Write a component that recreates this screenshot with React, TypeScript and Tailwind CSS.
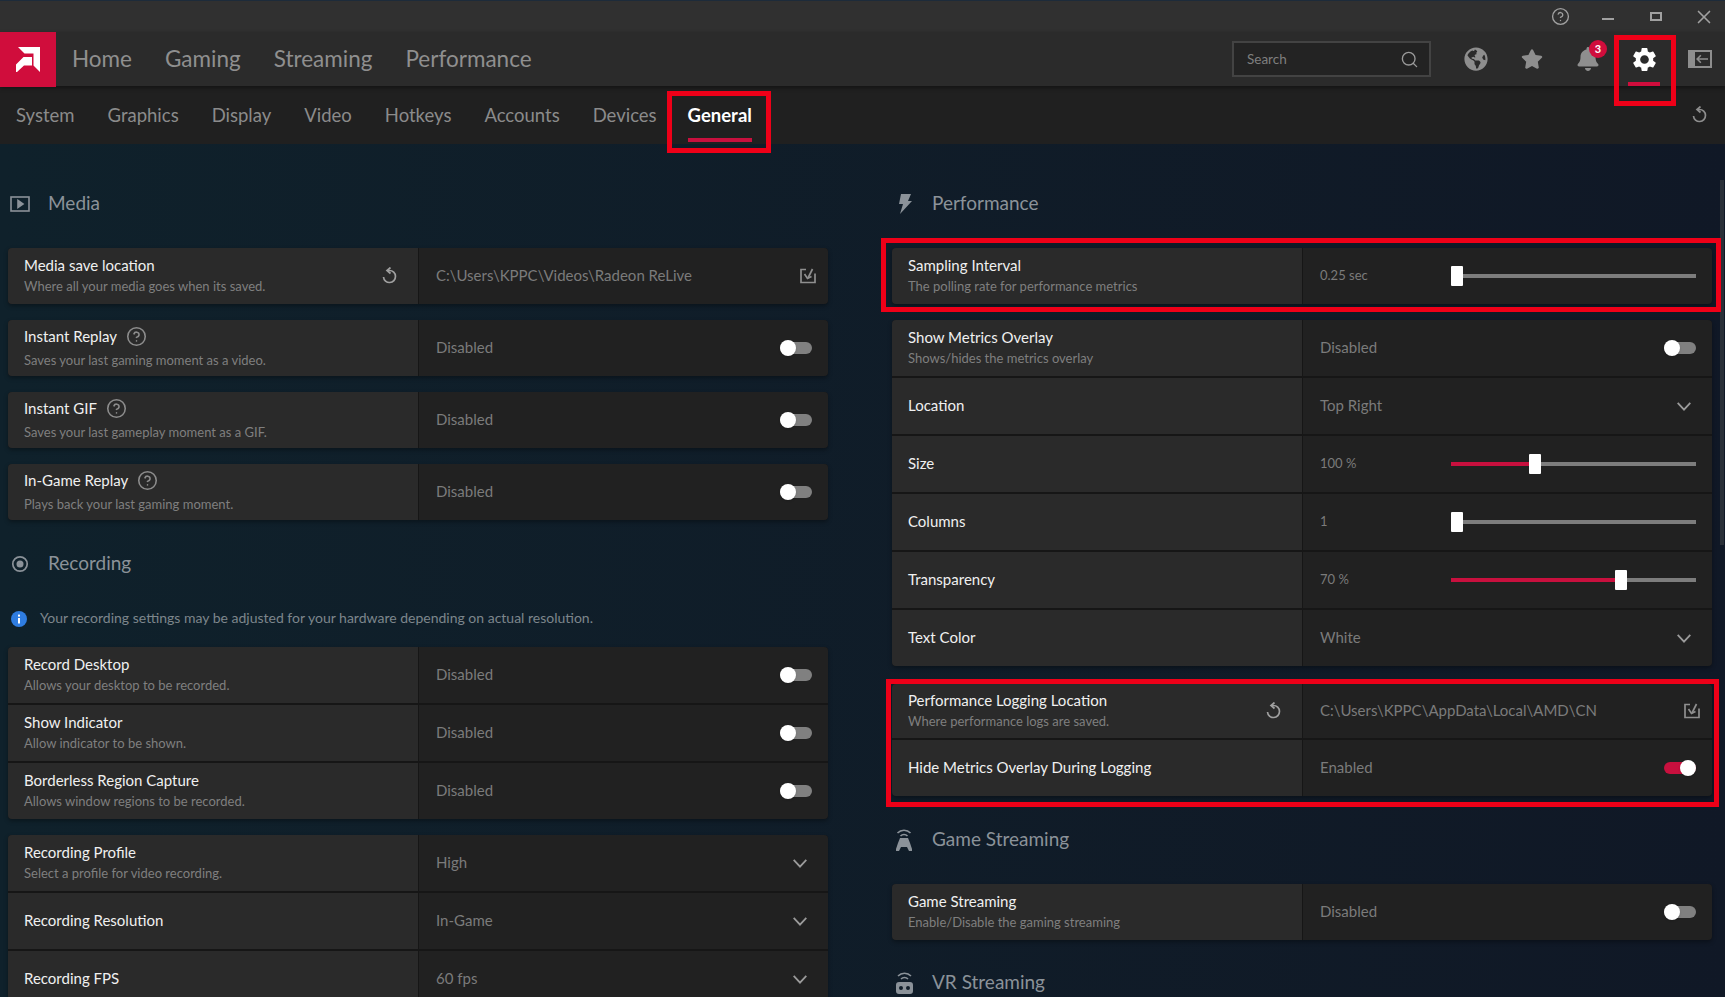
import React from 'react';
import { CircleHelp, Search, X } from 'lucide-react';
import { FaGlobeAmericas, FaStar, FaBell } from 'react-icons/fa';
import { MdSettings } from 'react-icons/md';

const font = "font-['Lato',sans-serif]";

function SaveIcon() {
  return (
    <svg width="16" height="16" viewBox="0 0 16 16" fill="none" stroke="#8f8f8f" strokeWidth="1.7" className="mr-[-4px]">
      <path d="M6 1.500H1v13h14V5.500" />
      <path d="M12.500 1 8 10" />
      <path d="M4.500 6 7.500 10.500 11.500 8.500" />
    </svg>
  );
}

function ResetIcon({ color = '#a0a0a0' }: { color?: string }) {
  return (
    <svg width="16" height="18" viewBox="0 0 16 18" fill="none" stroke={color} strokeWidth="1.7">
      <path d="M7 3.500h1.500a6 6 0 1 1-6 6.500" />
      <path d="M9.500 .5 6 3.500l3.500 3" />
    </svg>
  );
}

function Chevron() {
  return (
    <svg width="14" height="9" viewBox="0 0 14 9" fill="none" stroke="#9a9a9a" strokeWidth="1.800" className="mr-[5px]">
      <path d="M.7.800 7 7.600 13.300.8" />
    </svg>
  );
}

function Toggle({ on = false }: { on?: boolean }) {
  return (
    <div className={`relative h-[12px] w-[32px] rounded-full ${on ? 'bg-[#c8103e]' : 'bg-[#808080]'}`}>
      <div className={`absolute top-[-2px] h-[16px] w-[16px] rounded-full bg-white shadow ${on ? 'right-0' : 'left-0'}`} />
    </div>
  );
}

function Slider({ pct }: { pct: number }) {
  return (
    <div className="relative h-[4px] w-[245px] bg-[#7d7d7d]">
      <div className="absolute left-0 top-0 h-full bg-[#c8103e]" style={{ width: `${pct}%` }} />
      <div className="absolute top-[-8px] h-[20px] w-[12px] rounded-[1px] bg-white" style={{ left: `${pct}%` }} />
    </div>
  );
}

type RowProps = {
  title: string;
  desc?: string;
  help?: boolean;
  reset?: boolean;
  short?: boolean;
  value: string;
  control?: 'toggle' | 'on' | 'select' | 'save' | 'slider';
  pct?: number;
};

function Row({ title, desc, help, reset, short, value, control, pct = 0 }: RowProps) {
  return (
    <div className={`flex ${short ? 'h-[54px]' : 'h-[56px]'}`}>
      <div className="flex flex-1 items-center bg-[#2a2a2a] pl-4 pr-[21px]">
        <div className="flex-1 pb-[3px]">
          <div className={`flex items-center gap-[9px] text-[15px] text-[#f0f0f0] ${help ? 'h-[23px]' : 'leading-[20px]'}`}>
            {title}
            {help && <CircleHelp size={21} color="#8c8c8c" strokeWidth={1.8} />}
          </div>
          {desc && <div className={`text-[13px] leading-[18px] text-[#7f7f7f] ${help ? 'mt-[3px]' : 'mt-[2px]'}`}>{desc}</div>}
        </div>
        {reset && <ResetIcon />}
      </div>
      <div className="ml-[1px] flex w-[409px] items-center bg-[#212121] pl-[17px] pr-4">
        {control === 'slider' ? (
          <div className="w-[131px] text-[13px] text-[#7b7b7b]">{value}</div>
        ) : (
          <div className="flex-1 pb-[2px] text-[15px] text-[#7b7b7b]">{value}</div>
        )}
        {control === 'toggle' && <Toggle />}
        {control === 'on' && <Toggle on />}
        {control === 'select' && <Chevron />}
        {control === 'save' && <SaveIcon />}
        {control === 'slider' && <Slider pct={pct} />}
      </div>
    </div>
  );
}

function Group({ children }: { children: React.ReactNode }) {
  return (
    <div className="flex flex-col gap-[2px] overflow-hidden rounded-[4px] bg-[#161616] shadow-[0_2px_4px_rgba(0,0,0,0.35)]">
      {children}
    </div>
  );
}

function Heading({ icon, label }: { icon: React.ReactNode; label: string }) {
  return (
    <div className="flex h-[32px] items-center text-[19px] text-[#8b9299]">
      <div className="flex w-[40px] justify-start">{icon}</div>
      <span className="pb-[2px]">{label}</span>
    </div>
  );
}

const mainNav = ['Home', 'Gaming', 'Streaming', 'Performance'];
const subNav = ['System', 'Graphics', 'Display', 'Video', 'Hotkeys', 'Accounts', 'Devices'];

export default function App() {
  return (
    <div className={`relative flex h-[997px] w-[1725px] flex-col overflow-hidden bg-gradient-to-r from-[#0f212b] to-[#101826] ${font}`}>
      {/* title bar */}
      <div className="flex h-[32px] shrink-0 items-center justify-end border-t border-[#1d2b3a] bg-[#303030] pr-[10px] text-[#a0a0a0]">
        <CircleHelp size={19} strokeWidth={1.7} />
        <div className="ml-[32px] mt-[5px] h-[2px] w-[12px] bg-[#a0a0a0]" />
        <div className="ml-[36px] h-[9px] w-[12px] border-2 border-[#a0a0a0]" />
        <X size={22} strokeWidth={1.800} className="ml-[31px]" />
      </div>

      {/* main nav */}
      <div className="z-10 flex h-[54px] shrink-0 items-center bg-[#2b2b2b] shadow-[0_2px_4px_rgba(0,0,0,0.4)]">
        <div className="flex h-[55px] w-[56px] items-center justify-center bg-[#d00d3c]">
          <svg width="24" height="25" viewBox="0 0 24 25" fill="#fff">
            <path d="M2 0h22v25l-6.500-6.500V6.500H8.500z" />
            <path d="M0 17.500 7.500 10H16v8.500H8L1 25H0z" />
          </svg>
        </div>
        <div className="ml-[16px] flex gap-[33px] text-[22.5px] text-[#8f8f8f]">
          {mainNav.map((n) => (
            <span key={n}>{n}</span>
          ))}
        </div>
        <div className="ml-auto mr-[13px] flex items-center">
          <div className="flex h-[36px] w-[199px] items-center justify-between border-2 border-[#434343] bg-[#232323] pl-[13px] pr-[10px] text-[13.5px] text-[#7f7f7f]">
            Search
            <Search size={19} color="#9a9a9a" strokeWidth={1.7} />
          </div>
          <FaGlobeAmericas size={24} color="#8e8e8e" className="ml-[33px]" />
          <FaStar size={22} color="#8e8e8e" className="ml-[33px]" />
          <div className="relative ml-[33px]">
            <FaBell size={24} color="#8e8e8e" />
            <div className="absolute right-[-7px] top-[-7px] flex h-[18px] w-[18px] items-center justify-center rounded-full bg-[#d00d3c] text-[11px] font-bold text-white">3</div>
          </div>
          <div className="relative ml-[30px]">
            <MdSettings size={29} color="#fff" />
            <div className="absolute left-[-2px] top-[37px] h-[4px] w-[32px] bg-[#d00d3c]" />
          </div>
          <svg width="24" height="18" viewBox="0 0 24 18" className="ml-[29px]" fill="#8e8e8e">
            <path fillRule="evenodd" d="M0 0h24v18H0zM7 2v14h15V2z" />
            <path d="M20 8.200v1.600h-9l2.400 2.400-1.100 1.100L8 9l4.300-4.300 1.100 1.100L11 8.200z" />
          </svg>
        </div>
      </div>

      {/* sub nav */}
      <div className="flex h-[58px] shrink-0 items-center bg-[#202020] pl-4 pr-[18px] text-[18.5px] leading-[26px] text-[#8b8b8b]">
        <div className="flex gap-[33px]">
          {subNav.map((n) => (
            <span key={n}>{n}</span>
          ))}
          <span className="relative ml-[-2px] font-bold text-white">
            General
            <span className="absolute bottom-[-14px] left-0 h-[4px] w-full bg-[#c8103e]" />
          </span>
        </div>
        <div className="ml-auto">
          <ResetIcon color="#8e8e8e" />
        </div>
      </div>

      {/* content */}
      <div className="flex gap-[64px] pl-2 pr-[13px] pt-[44px]">
        <div className="flex w-[820px] shrink-0 flex-col">
          <Heading
            label="Media"
            icon={
              <svg width="20" height="16" viewBox="0 0 20 16" fill="none" stroke="#8b9299" strokeWidth="1.6" className="ml-[2px]">
                <rect x="1" y="1" width="18" height="14" />
                <path d="M8 4.500 13 8l-5 3.500z" fill="#8b9299" />
              </svg>
            }
          />
          <div className="mt-[28px] flex flex-col gap-4">
            <Group>
              <Row title="Media save location" desc="Where all your media goes when its saved." reset value="C:\Users\KPPC\Videos\Radeon ReLive" control="save" />
            </Group>
            <Group>
              <Row title="Instant Replay" desc="Saves your last gaming moment as a video." help value="Disabled" control="toggle" />
            </Group>
            <Group>
              <Row title="Instant GIF" desc="Saves your last gameplay moment as a GIF." help value="Disabled" control="toggle" />
            </Group>
            <Group>
              <Row title="In-Game Replay" desc="Plays back your last gaming moment." help value="Disabled" control="toggle" />
            </Group>
          </div>
          <div className="mt-[28px]">
            <Heading
              label="Recording"
              icon={
                <svg width="18" height="18" viewBox="0 0 18 18" className="ml-[3px]">
                  <circle cx="9" cy="9" r="7.200" fill="none" stroke="#8b9299" strokeWidth="1.700" />
                  <circle cx="9" cy="9" r="3.500" fill="#8b9299" />
                </svg>
              }
            />
          </div>
          <div className="mt-[28px] flex h-[22px] items-center text-[14px] text-[#7d868c]">
            <svg width="16" height="16" viewBox="0 0 16 16" className="ml-[3px] mr-[13px]">
              <circle cx="8" cy="8" r="8" fill="#2f7de1" />
              <rect x="7" y="7" width="2" height="5.500" fill="#fff" />
              <rect x="7" y="3.600" width="2" height="2" fill="#fff" />
            </svg>
            <span className="pb-[3px]">Your recording settings may be adjusted for your hardware depending on actual resolution.</span>
          </div>
          <div className="mt-[17px] flex flex-col gap-4">
            <Group>
              <Row title="Record Desktop" desc="Allows your desktop to be recorded." value="Disabled" control="toggle" />
              <Row title="Show Indicator" desc="Allow indicator to be shown." value="Disabled" control="toggle" />
              <Row title="Borderless Region Capture" desc="Allows window regions to be recorded." value="Disabled" control="toggle" />
            </Group>
            <Group>
              <Row title="Recording Profile" desc="Select a profile for video recording." value="High" control="select" />
              <Row title="Recording Resolution" value="In-Game" control="select" />
              <Row title="Recording FPS" value="60 fps" control="select" />
            </Group>
          </div>
        </div>

        <div className="flex w-[820px] shrink-0 flex-col">
          <Heading
            label="Performance"
            icon={
              <svg width="16" height="20" viewBox="0 0 16 20" fill="#8b9299" className="ml-[4px]">
                <path d="M5 0h10l-3 7h4L4 20l3-10H3z" />
              </svg>
            }
          />
          <div className="mt-[28px] flex flex-col gap-4">
            <Group>
              <Row title="Sampling Interval" desc="The polling rate for performance metrics" value="0.25 sec" control="slider" pct={0} />
            </Group>
            <Group>
              <Row title="Show Metrics Overlay" desc="Shows/hides the metrics overlay" value="Disabled" control="toggle" />
              <Row title="Location" value="Top Right" control="select" />
              <Row title="Size" value="100 %" control="slider" pct={32} />
              <Row title="Columns" value="1" control="slider" pct={0} />
              <Row title="Transparency" value="70 %" control="slider" pct={67} />
              <Row title="Text Color" value="White" control="select" />
            </Group>
            <div className="mt-[2px]">
              <Group>
                <Row title="Performance Logging Location" desc="Where performance logs are saved." reset short value="C:\Users\KPPC\AppData\Local\AMD\CN" control="save" />
                <Row title="Hide Metrics Overlay During Logging" value="Enabled" control="on" />
              </Group>
            </div>
          </div>
          <div className="mt-[28px]">
            <Heading
              label="Game Streaming"
              icon={
                <svg width="16" height="22" viewBox="0 0 16 22" fill="#8b9299" className="ml-[4px]">
                  <path d="M1.500 4a9 9 0 0 1 13 0" fill="none" stroke="#8b9299" strokeWidth="1.600" />
                  <path d="M4.500 7a5 5 0 0 1 7 0" fill="none" stroke="#8b9299" strokeWidth="1.600" />
                  <path d="M4 9h8l2 5 2 6v2h-3l-2-4H5l-2 4H0v-2l2-6z" />
                </svg>
              }
            />
          </div>
          <div className="mt-[28px]">
            <Group>
              <Row title="Game Streaming" desc="Enable/Disable the gaming streaming" value="Disabled" control="toggle" />
            </Group>
          </div>
          <div className="mt-[27px]">
            <Heading
              label="VR Streaming"
              icon={
                <svg width="17" height="22" viewBox="0 0 17 22" fill="#8b9299" className="ml-[4px]">
                  <path d="M2 4a9 9 0 0 1 13 0" fill="none" stroke="#8b9299" strokeWidth="1.600" />
                  <path d="M5 7a5 5 0 0 1 7 0" fill="none" stroke="#8b9299" strokeWidth="1.600" />
                  <path fillRule="evenodd" d="M3 10h11a3 3 0 0 1 3 3v6a3 3 0 0 1-3 3H3a3 3 0 0 1-3-3v-6a3 3 0 0 1 3-3zm2 4a2 2 0 0 0 0 4 2 2 0 0 0 0-4zm7 0a2 2 0 0 0 0 4 2 2 0 0 0 0-4z" />
                </svg>
              }
            />
          </div>
        </div>
      </div>

      {/* scrollbar */}
      <div className="absolute right-[1px] top-[180px] h-[365px] w-[4px] bg-[#2a3038]" />

      {/* annotation boxes */}
      <div className="absolute left-[667px] top-[91px] z-20 h-[62px] w-[104px] border-[5px] border-[#ee0018]" />
      <div className="absolute left-[1614px] top-[35px] z-20 h-[71px] w-[62px] border-[5px] border-[#ee0018]" />
      <div className="absolute left-[881px] top-[238px] z-20 h-[74px] w-[840px] border-[5px] border-[#ee0018]" />
      <div className="absolute left-[886px] top-[679px] z-20 h-[128px] w-[833px] border-[5px] border-[#ee0018]" />
    </div>
  );
}
